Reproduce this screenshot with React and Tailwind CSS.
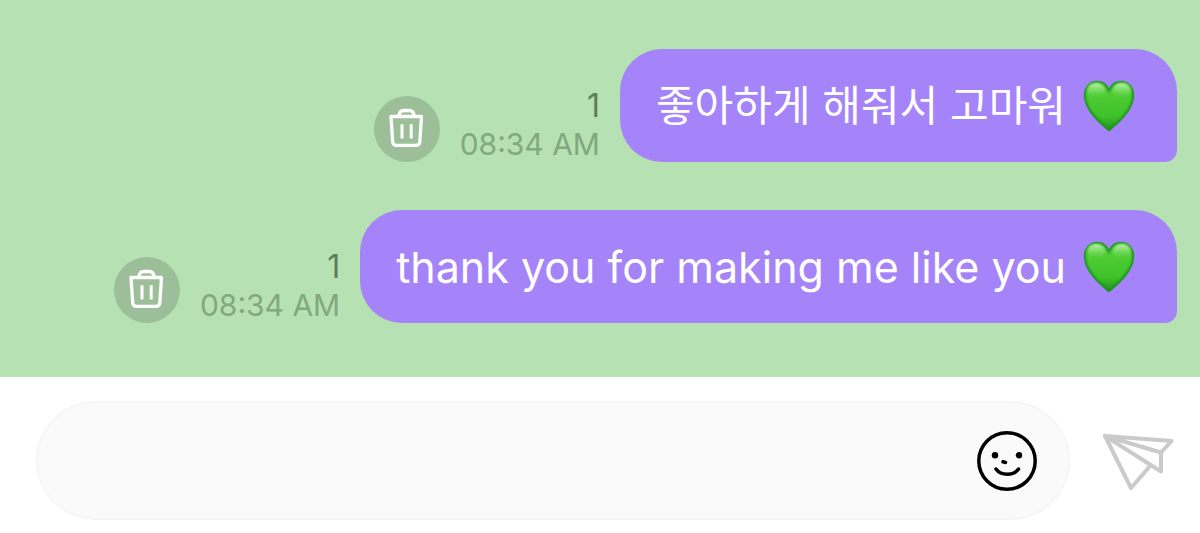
import React from "react";

function TrashIcon() {
  return (
    <svg viewBox="0 0 66 66" className="size-full" fill="none" stroke="#fff" strokeLinecap="round" strokeLinejoin="round" aria-hidden="true">
      <path d="M17 20.500H47.500L45.800 45.800q-.3 3.600-4 3.600H22.700q-3.700 0-4-3.600Z" strokeWidth="3.300" />
      <path d="M24.800 19.500q1-5 4.700-5h6q3.700 0 4.700 5" strokeWidth="3.300" />
      <path d="M28 28.200v14.200M37.200 28.200v14.200" strokeWidth="3" strokeLinecap="butt" />
    </svg>
  );
}

function GreenHeart() {
  const shape = "M26 51.500C19 45.500 .8 31.500 .8 15 .8 7 6.500 .8 14 .8c5.500 0 9.500 2.700 12 7.700C28.500 3.500 32.500 .8 38 .8c7.500 0 13.200 6.200 13.200 14.200C51.200 31.500 33 45.500 26 51.500Z";
  return (
    <svg viewBox="0 0 52 52" className="size-[52px] shrink-0" role="img" aria-label="green heart">
      <defs>
        <linearGradient id="heart-fill" x1="0" y1="0" x2="0" y2="1">
          <stop offset="0" stopColor="#5fd048" />
          <stop offset=".35" stopColor="#4ccb32" />
          <stop offset=".7" stopColor="#3fc12a" />
          <stop offset="1" stopColor="#1f8f20" />
        </linearGradient>
        <linearGradient id="heart-shine" x1="0" y1="0" x2="0" y2="1">
          <stop offset="0" stopColor="#c4f5b4" stopOpacity=".95" />
          <stop offset="1" stopColor="#7fe066" stopOpacity="0" />
        </linearGradient>
        <clipPath id="heart-clip"><path d={shape} /></clipPath>
        <filter id="heart-soft" x="-20%" y="-20%" width="140%" height="140%">
          <feGaussianBlur stdDeviation="1.300" />
        </filter>
      </defs>
      <g clipPath="url(#heart-clip)">
        <path d={shape} fill="url(#heart-fill)" />
        <path d={shape} fill="none" stroke="#1c9322" strokeWidth="4" filter="url(#heart-soft)" />
        <g filter="url(#heart-soft)">
          <ellipse cx="13" cy="10" rx="9" ry="7" fill="url(#heart-shine)" />
          <ellipse cx="39" cy="10" rx="9" ry="7" fill="url(#heart-shine)" />
        </g>
      </g>
    </svg>
  );
}

function SmileIcon() {
  return (
    <svg viewBox="0 0 60 60" className="size-full" fill="none" stroke="#000" strokeLinecap="round" aria-hidden="true">
      <circle cx="30" cy="30" r="28.200" strokeWidth="3.500" />
      <circle cx="18" cy="24.300" r="3.200" fill="#000" stroke="none" />
      <circle cx="42" cy="24.300" r="3.200" fill="#000" stroke="none" />
      <path d="M26 30.800l2.500.6" strokeWidth="3.600" />
      <path d="M19 38c5 7 17.500 7 22.500 0" strokeWidth="3.500" />
    </svg>
  );
}

function SendIcon() {
  return (
    <svg viewBox="0 0 72 58" className="h-[58px] w-[72px]" fill="none" stroke="#cacaca" strokeWidth="4" strokeLinecap="round" strokeLinejoin="round" aria-hidden="true">
      <path d="M3 4 69.500 9 59 20.500Z" />
      <path d="M3 4 59 39.500V20.500" />
      <path d="M3 4 29 56 48 34" />
    </svg>
  );
}

function Message({ children, lang, textSize }) {
  return (
    <li className="flex items-end justify-end gap-5">
      <button type="button" aria-label="Delete message" className="size-[66px] shrink-0 rounded-full bg-[#9cbf99]">
        <TrashIcon />
      </button>
      <div className="flex shrink-0 flex-col items-end whitespace-nowrap">
        <span className="text-[32px] leading-10 text-[#5d7e5b]">1</span>
        <time dateTime="08:34" className="text-[30px] leading-9 text-[#82a880]">08:34 AM</time>
      </div>
      <div className="flex min-h-[113px] items-center gap-[17px] rounded-[42px] rounded-br-[12px] bg-[#a583f9] pr-[42px] pl-9 text-white">
        <p lang={lang} className={`${textSize} leading-[56px]`}>{children}</p>
        <GreenHeart />
      </div>
    </li>
  );
}

export default function App() {
  return (
    <main className="flex min-h-screen flex-col bg-white font-['Inter','Noto_Sans_CJK_KR',sans-serif]">
      <ul className="flex flex-col gap-12 bg-[#b6e1b3] pt-[49px] pr-[23px] pb-[54px] pl-6">
        <Message lang="ko" textSize="text-[42px]">좋아하게 해줘서 고마워</Message>
        <Message lang="en" textSize="text-[43px]">thank you for making me like you</Message>
      </ul>
      <form className="flex items-center gap-8 pt-6 pr-[26px] pl-9" onSubmit={(e) => e.preventDefault()}>
        <div className="flex h-[119px] grow items-center rounded-full border-2 border-[#f6f6f6] bg-[#fafafa] pr-[31px] pl-10">
          <input type="text" aria-label="Message" className="min-w-0 grow bg-transparent text-[43px] outline-none" />
          <button type="button" aria-label="Choose emoji" className="size-[60px] shrink-0">
            <SmileIcon />
          </button>
        </div>
        <button type="submit" aria-label="Send message" className="shrink-0">
          <SendIcon />
        </button>
      </form>
    </main>
  );
}
